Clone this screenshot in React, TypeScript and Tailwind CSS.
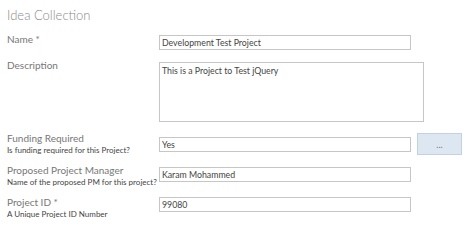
import React from 'react';

const font = "font-['Lato','Noto_Sans',sans-serif]";

const Label: React.FC<{ title: string; hint?: string }> = ({ title, hint }) => (
  <div className="w-[152px] shrink-0 whitespace-nowrap">
    <div className="text-[10px] leading-[13px] text-[#777]">{title}</div>
    {hint && <div className="text-[8px] leading-[10px] text-[#444]">{hint}</div>}
  </div>
);

const TextBox: React.FC<{ value: string; className?: string }> = ({ value, className = '' }) => (
  <div
    className={`w-[252px] h-[15px] shrink-0 border border-[#c6c6c6] bg-white px-[2px] text-[8.75px] leading-[13px] text-[#444] ${className}`}
  >
    {value}
  </div>
);

export default function App() {
  return (
    <div className={`w-[474px] h-[250px] bg-white px-[7px] pt-[5px] ${font}`}>
      <h2 className="text-[13px] leading-[20px] font-light text-[#8a8a8a]">Idea Collection</h2>

      <div className="flex items-start mt-[8px]">
        <Label title="Name *" />
        <TextBox value="Development Test Project" className="mt-[2px]" />
      </div>

      <div className="flex items-start mt-[9px]">
        <Label title="Description" />
        <div className="mt-[3px] w-[265px] h-[60px] border border-[#c6c6c6] px-[2px] pt-[1px] text-[8.75px] leading-[13px] text-[#444]">
          This is a Project to Test jQuery
        </div>
      </div>

      <div className="flex items-start mt-[10px]">
        <Label title="Funding Required" hint="Is funding required for this Project?" />
        <TextBox value="Yes" className="mt-[5px]" />
        <button className="ml-[6px] mt-[1px] w-[45px] h-[22px] border border-[#c3d2e1] bg-[#dce7f2] text-[9px] leading-none text-[#777]">
          ...
        </button>
      </div>

      <div className="flex items-start mt-[9px]">
        <Label title="Proposed Project Manager" hint="Name of the proposed PM for this project?" />
        <TextBox value="Karam Mohammed" className="mt-[3px]" />
      </div>

      <div className="flex items-start mt-[9px]">
        <Label title="Project ID *" hint="A Unique Project ID Number" />
        <TextBox value="99080" className="mt-[1px]" />
      </div>
    </div>
  );
}
